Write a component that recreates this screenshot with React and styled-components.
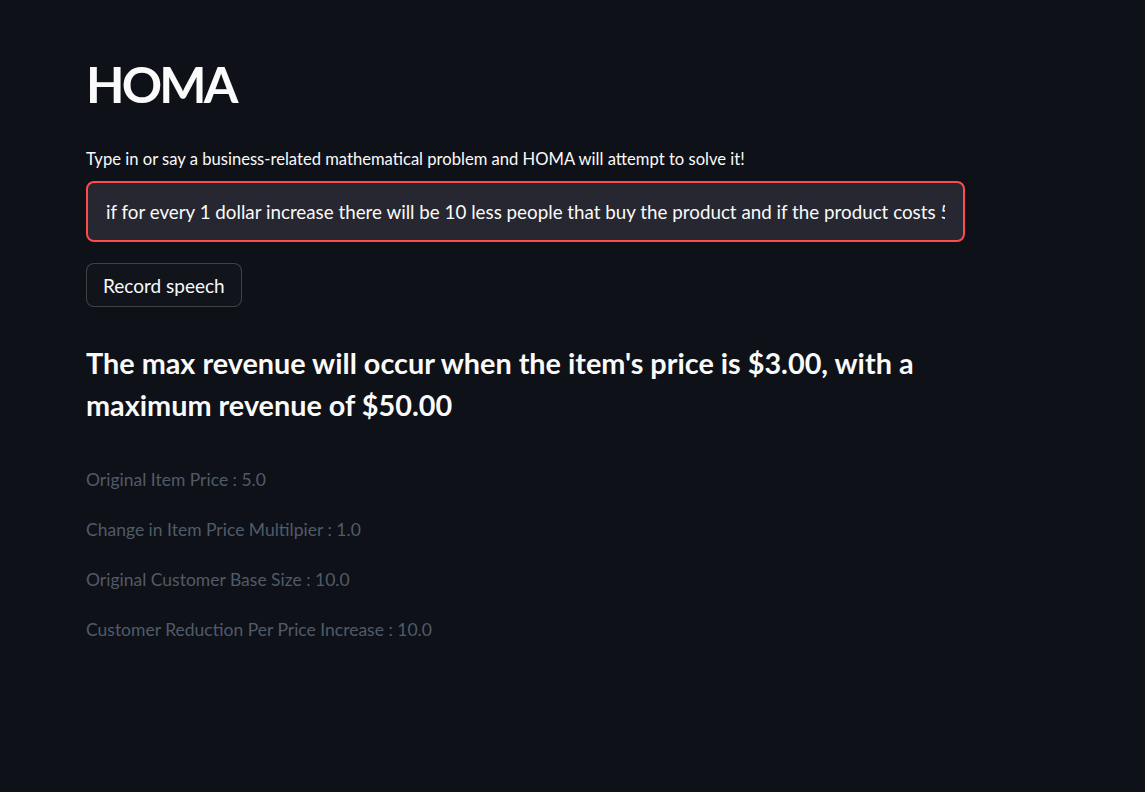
import React, { useState } from "react";
import styled, { createGlobalStyle } from "styled-components";

const GlobalStyle = createGlobalStyle`
  html, body {
    margin: 0;
    padding: 0;
    background: #0e1117;
  }
  body {
    font-family: "Lato", "Noto Sans", sans-serif;
    color: #fafafa;
  }
`;

const params = [
  ["Original Item Price", "5.0"],
  ["Change in Item Price Multilpier", "1.0"],
  ["Original Customer Base Size", "10.0"],
  ["Customer Reduction Per Price Increase", "10.0"],
];

const App = () => {
  const [problem, setProblem] = useState(
    "if for every 1 dollar increase there will be 10 less people that buy the product and if the product costs 5 dollars with 100 customers, what price maximizes revenue?"
  );

  return (
    <Page>
      <GlobalStyle />
      <Main>
        <Title>HOMA</Title>
        <Label htmlFor="problem">
          Type in or say a business-related mathematical problem and HOMA will attempt to solve it!
        </Label>
        <ProblemInput
          id="problem"
          value={problem}
          onChange={(e) => setProblem(e.target.value)}
        />
        <RecordButton type="button">Record speech</RecordButton>
        <Answer>
          The max revenue will occur when the item's price is $3.00, with a maximum
          revenue of $50.00
        </Answer>
        <ParamList>
          {params.map(([name, value]) => (
            <Param key={name}>
              {name} : {value}
            </Param>
          ))}
        </ParamList>
      </Main>
    </Page>
  );
};

const Page = styled.div`
  min-height: 792px;
  background: #0e1117;
`;

const Main = styled.div`
  width: 879px;
  padding: 52px 0 0 86px;
  display: flex;
  flex-direction: column;
  align-items: flex-start;
`;

const Title = styled.h1`
  margin: 0;
  font-size: 50px;
  font-weight: 700;
  line-height: 64px;
  letter-spacing: -2.8px;
`;

const Label = styled.label`
  margin-top: 32px;
  font-size: 16.6px;
  line-height: 23px;
`;

const ProblemInput = styled.input`
  box-sizing: border-box;
  margin-top: 10px;
  width: 100%;
  height: 61px;
  padding: 0 18px;
  border: 2px solid #ff4b4b;
  border-radius: 8px;
  background: #262730;
  color: #fafafa;
  font-family: inherit;
  font-size: 18.8px;
  outline: none;
`;

const RecordButton = styled.button`
  box-sizing: border-box;
  margin-top: 21px;
  height: 44px;
  padding: 0 16px;
  border: 1px solid rgba(250, 250, 250, 0.2);
  border-radius: 8px;
  background: #11141b;
  color: #fafafa;
  font-family: inherit;
  font-size: 19px;
  cursor: pointer;
`;

const Answer = styled.h3`
  margin: 35px 0 0;
  font-size: 28.8px;
  font-weight: 700;
  line-height: 42px;
`;

const ParamList = styled.div`
  margin-top: 42px;
  display: flex;
  flex-direction: column;
  gap: 27px;
`;

const Param = styled.p`
  margin: 0;
  font-size: 17.5px;
  line-height: 23px;
  color: #505b69;
`;

export default App;
